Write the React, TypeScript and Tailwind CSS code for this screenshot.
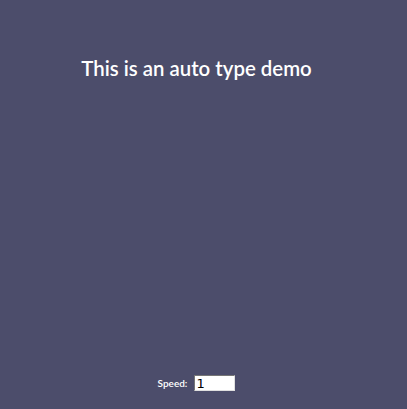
export default function App() {
  return (
    <div className="flex h-screen flex-col items-center bg-[#4c4d6b] pr-[14px] font-['Lato',sans-serif] text-white">
      <h1 className="mt-[54px] text-[20.4px] leading-[28px] font-semibold">This is an auto type demo</h1>
      <div className="mt-auto mb-[18px] flex items-center gap-[7px]">
        <label className="text-[10px] font-semibold">Speed:</label>
        <input
          defaultValue="1"
          className="h-[16px] w-[41px] border border-t-[#767676] border-l-[#767676] border-r-[#e0e0e0] border-b-[#e0e0e0] bg-white px-[1px] font-['DejaVu_Sans',sans-serif] text-[13px] leading-[13px] text-black"
        />
      </div>
    </div>
  );
}
